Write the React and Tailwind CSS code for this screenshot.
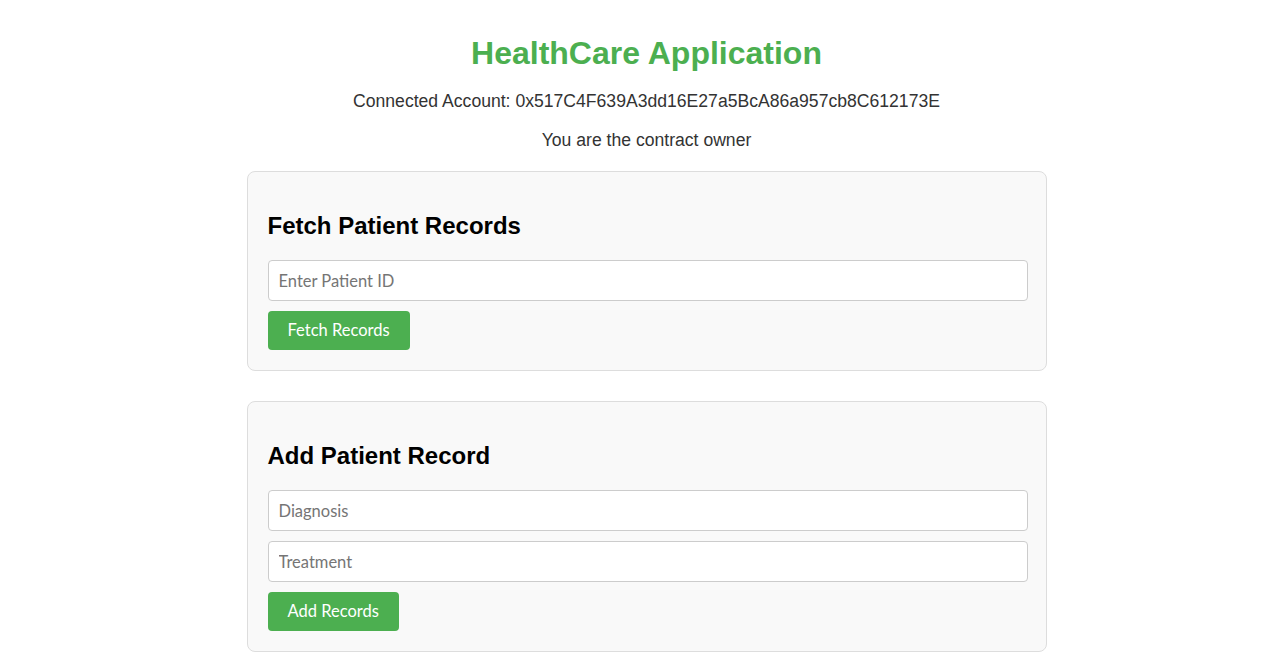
export default function App() {
  return (
    <div className="min-h-screen bg-white text-[#333] font-['Liberation_Sans',Arial,sans-serif]">
      <div className="flex flex-col items-center pt-[35px] pl-2">
        <h1 className="text-[32px] leading-[37px] font-bold text-[#4caf50]">HealthCare Application</h1>
        <p className="mt-[19px] text-[17.6px] leading-[21px]">
          Connected Account: 0x517C4F639A3dd16E27a5BcA86a957cb8C612173E
        </p>
        <p className="mt-[18px] text-[17.6px] leading-[21px]">You are the contract owner</p>

        <div className="mt-[20px] w-[800px] flex flex-col gap-[30px]">
          <Card title="Fetch Patient Records">
            <Field placeholder="Enter Patient ID" />
            <Button>Fetch Records</Button>
          </Card>
          <Card title="Add Patient Record">
            <Field placeholder="Diagnosis" />
            <Field placeholder="Treatment" />
            <Button>Add Records</Button>
          </Card>
        </div>
      </div>
    </div>
  )
}

function Card({ title, children }) {
  return (
    <div className="rounded-lg border border-[#ddd] bg-[#f9f9f9] p-5">
      <h2 className="mt-5 mb-5 text-[24px] leading-[28px] font-bold text-black">{title}</h2>
      <div className="flex flex-col items-start gap-[10px]">{children}</div>
    </div>
  )
}

function Field({ placeholder }) {
  return (
    <input
      type="text"
      placeholder={placeholder}
      className="w-[760px] h-[41px] rounded border border-[#ccc] bg-white px-[10px] text-[16.5px] font-['Lato',sans-serif] placeholder:text-[#757575] outline-none"
    />
  )
}

function Button({ children }) {
  return (
    <button className="h-[39px] rounded bg-[#4caf50] px-5 text-[16.5px] text-white font-['Lato',sans-serif]">
      {children}
    </button>
  )
}
